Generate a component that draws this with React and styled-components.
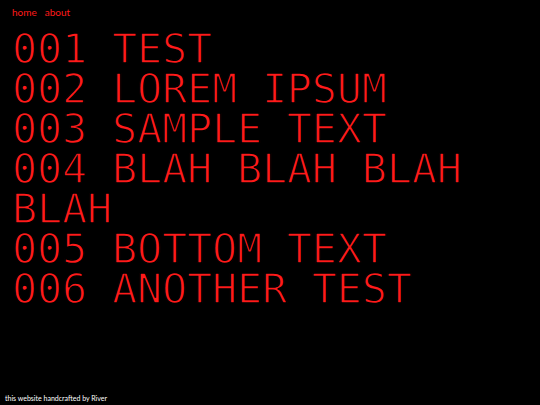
import React from "react";
import styled, { createGlobalStyle } from "styled-components";

const items = [
  "TEST",
  "LOREM IPSUM",
  "SAMPLE TEXT",
  "BLAH BLAH BLAH BLAH",
  "BOTTOM TEXT",
  "ANOTHER TEST",
];

const pad = (n) => String(n).padStart(3, "0");

export default function App() {
  return (
    <>
      <GlobalStyle />
      <Page>
        <Nav>
          <NavLink href="#">home</NavLink>
          <NavLink href="#">about</NavLink>
        </Nav>
        <List>
          {items.map((title, i) => (
            <Entry key={title}>
              {pad(i + 1)} {title}
            </Entry>
          ))}
        </List>
        <Footer>this website handcrafted by River</Footer>
      </Page>
    </>
  );
}

const GlobalStyle = createGlobalStyle`
  html, body {
    margin: 0;
    background: #000;
  }
`;

const Page = styled.div`
  min-height: 100vh;
  box-sizing: border-box;
  display: flex;
  flex-direction: column;
  padding: 0 12px;
`;

const Nav = styled.nav`
  display: flex;
  gap: 8px;
  padding-top: 6px;
  font-family: Lato, "Noto Sans", sans-serif;
  font-size: 10px;
`;

const NavLink = styled.a`
  color: #ff1a1a;
  text-decoration: none;
`;

const List = styled.ol`
  list-style: none;
  margin: 11px 0 0;
  padding: 0;
`;

/* thin the mono face a little by stroking its outline in black */
const Entry = styled.li`
  font-family: "DejaVu Sans Mono", "Liberation Mono", monospace;
  font-size: 41.5px;
  line-height: 40px;
  color: #ff1a1a;
  -webkit-text-stroke: 1.4px #000;
`;

const Footer = styled.footer`
  margin-top: auto;
  margin-left: -7px;
  padding-bottom: 3px;
  font-family: Lato, "Noto Sans", sans-serif;
  font-size: 7px;
  color: #fff;
`;
